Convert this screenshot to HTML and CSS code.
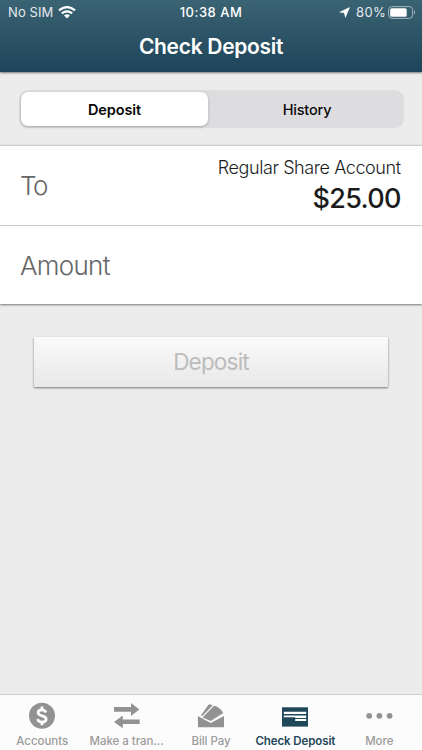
FILE: index.html
```html
<!DOCTYPE html>
<html lang="en">
<head>
<meta charset="utf-8">
<title>Check Deposit</title>
<link rel="stylesheet" href="styles.css">
</head>
<body>
<header class="header">
  <div class="status">
    <div class="status-left"><span class="carrier">No SIM</span>
      <svg class="wifi" width="18" height="13" viewBox="0 0 18 13"><path d="M1 4.3Q9-2 17 4.3M3.8 7.4Q9 3.3 14.2 7.4" fill="none" stroke="#fff" stroke-width="2.3"/><path d="M6 9.5Q9 7.1 12 9.5L9 12.5Z" fill="#fff"/></svg>
    </div>
    <span class="time">10:38 AM</span>
    <div class="status-right">
      <svg class="location" width="11" height="11" viewBox="0 0 11 11"><path d="M11 0L6.4 11 5 6 0 5.2Z" fill="#fff"/></svg>
      <span class="percent">80%</span>
      <svg class="battery" width="28" height="13" viewBox="0 0 28 13"><rect x=".6" y=".6" width="24" height="11.8" rx="3.2" fill="none" stroke="#a3b5bd"/><rect x="2.2" y="2.2" width="16.5" height="8.6" rx="1.6" fill="#fff"/><path d="M26 4.3q2.2 2.2 0 4.4z" fill="#a3b5bd"/></svg>
    </div>
  </div>
  <h1 class="title">Check Deposit</h1>
</header>
<main>
  <div class="segments">
    <button class="segment selected"><span>Deposit</span></button>
    <button class="segment"><span>History</span></button>
  </div>
  <section class="form">
    <div class="row">
      <span class="label to">To</span>
      <div class="account"><span class="account-name">Regular Share Account</span><span class="balance">$25.00</span></div>
    </div>
    <div class="row"><span class="label">Amount</span></div>
  </section>
  <button class="submit" disabled><span>Deposit</span></button>
</main>
<nav class="tabs">
  <a class="tab"><svg width="28" height="28" viewBox="0 0 28 28"><circle cx="14" cy="13.8" r="13" fill="#929292"/><path d="M18 10.6C17.2 8.7 15.9 7.9 14 7.9c-2.3 0-3.9 1.1-3.9 2.9 0 4 8 2.1 8 6.2 0 2-1.7 3.1-4.1 3.1-2.2 0-3.7-.8-4.4-3M14 4.5v3.5M14 20v3.3" fill="none" stroke="#fff" stroke-width="2.7"/></svg><span class="tab-text">Accounts</span></a>
  <a class="tab"><svg width="28" height="28" viewBox="0 0 28 28"><path d="M1 5h17V1l8.3 6.4-8.3 6.5V9.8H1zM26.7 22H9.8v4.2L1 19.9l8.8-6.4v4h16.9z" fill="#929292"/></svg><span class="tab-text">Make a tran...</span></a>
  <a class="tab"><svg width="28" height="28" viewBox="0 0 28 28"><g fill="#929292"><path d="M.9 14l12.8 7L27 14v11.2H.9z"/><path d="M4 13.2L11.5 2.7q.9-.9 2.2-.3l2 1.2L5.5 14.3z"/><path d="M5.6 15.6L17 3.8q5.5.9 9.3 7.1L13.7 19z"/></g><path d="M4.8 15L16.2 3.6" stroke="#fcfcfc" stroke-width=".9" fill="none"/></svg><span class="tab-text">Bill Pay</span></a>
  <a class="tab active"><svg width="28" height="28" viewBox="0 0 28 28"><path d="M1 5.3h26v19.3H1z" fill="#1f475a"/><path d="M2.8 9.8h22.4V12H2.8zM2.8 13.4h22.4v1.9H2.8zM14.2 15.3h11v.6h-11zM14.2 17h11v2h-11z" fill="#fff"/></svg><span class="tab-text">Check Deposit</span></a>
  <a class="tab"><svg width="28" height="28" viewBox="0 0 28 28"><g fill="#929292"><circle cx="3.2" cy="13.8" r="2.9"/><circle cx="13.4" cy="13.8" r="2.9"/><circle cx="23.6" cy="13.8" r="2.9"/></g></svg><span class="tab-text more">More</span></a>
</nav>
</body>
</html>
```
FILE: styles.css
```css
* { box-sizing: border-box; }
body {
  margin: 0;
  height: 750px;
  display: flex;
  flex-direction: column;
  background: #ececec;
  font-family: Inter, "Liberation Sans", sans-serif;
  color: #1c1c1c;
  overflow: hidden;
}
button { border: 0; margin: 0; padding: 0; font-family: inherit; }
svg { display: block; flex: none; }
.header {
  height: 72px;
  flex: none;
  background: linear-gradient(#3a6373, #1e4459);
  box-shadow: 0 1px 2px #777;
  color: #fff;
}
.status {
  height: 24px;
  display: grid;
  grid-template-columns: 1fr auto 1fr;
  align-items: center;
  padding: 0 6px 0 8px;
  font-size: 13px;
  line-height: 24px;
}
.status-left, .status-right { display: flex; align-items: center; }
.status-left { gap: 5px; }
.status-right { justify-content: flex-end; }
.carrier, .percent { font-weight: 400; color: #e4eaed; }
.carrier { letter-spacing: .1px; }
.percent { letter-spacing: .3px; margin-right: 2px; }
.time { font-weight: 500; letter-spacing: .5px; margin-right: 2px; }
.location { margin-right: 6px; }
.title {
  margin: 11px 0 0;
  text-align: center;
  font-size: 21px;
  font-weight: 600;
  letter-spacing: -.3px;
  line-height: 24px;
}
main { flex: 1; }
.segments {
  display: flex;
  margin: 18px 18px 17px 19px;
  height: 38px;
  padding: 2px;
  border-radius: 9px;
  background: #dddde0;
}
.segment {
  flex: 1;
  padding-left: 4px;
  background: transparent;
  color: #080808;
  font-size: 14.5px;
  font-weight: 500;
  letter-spacing: -.2px;
  border-radius: 7px;
}
.segment.selected {
  flex: 0 0 187px;
  padding-left: 0;
  background: #fff;
  font-weight: 600;
  letter-spacing: -.1px;
  box-shadow: 0 1px 3px rgba(0,0,0,.25);
}
.form { background: #fff; border-top: 1px solid #ccc; box-shadow: 0 1px 2px #777; }
.row {
  height: 79px;
  display: flex;
  align-items: center;
  justify-content: space-between;
  padding: 0 21px 0 20px;
}
.row + .row { border-top: 1px solid #ccc; }
.label { font-size: 26px; font-weight: 300; letter-spacing: -.7px; color: #666; }
.to { letter-spacing: -1.4px; }
.account { display: flex; flex-direction: column; align-items: flex-end; padding-top: 2px; }
.account-name { font-size: 18px; line-height: 24px; font-weight: 300; letter-spacing: -.42px; margin-right: .4px; }
.balance { font-size: 27px; line-height: 37px; font-weight: 500; letter-spacing: -.7px; margin-right: .3px; }
.submit {
  display: block;
  margin: 33px auto 0;
  width: 354px;
  height: 50px;
  padding-bottom: 2px;
  font-size: 22.5px;
  font-weight: 400;
  letter-spacing: -.8px;
  color: #bcbcbc;
  background: linear-gradient(#fafafa, #e8e8e8);
  box-shadow: 0 1px 2px #777;
}
.tabs {
  height: 56px;
  flex: none;
  display: grid;
  grid-template-columns: repeat(5, 1fr);
  border-top: 1px solid #cfcfcf;
  background: #fcfcfc;
}
.tab { display: flex; flex-direction: column; align-items: center; padding-top: 7px; color: #9b9b9b; }
.tab-text { font-size: 11.5px; line-height: 14px; margin-top: 4px; font-weight: 500; letter-spacing: -.05px; white-space: nowrap; }
.active { color: #1f475a; }
.active .tab-text { font-weight: 600; letter-spacing: -.1px; }
.more { margin-right: 1px; }
```
